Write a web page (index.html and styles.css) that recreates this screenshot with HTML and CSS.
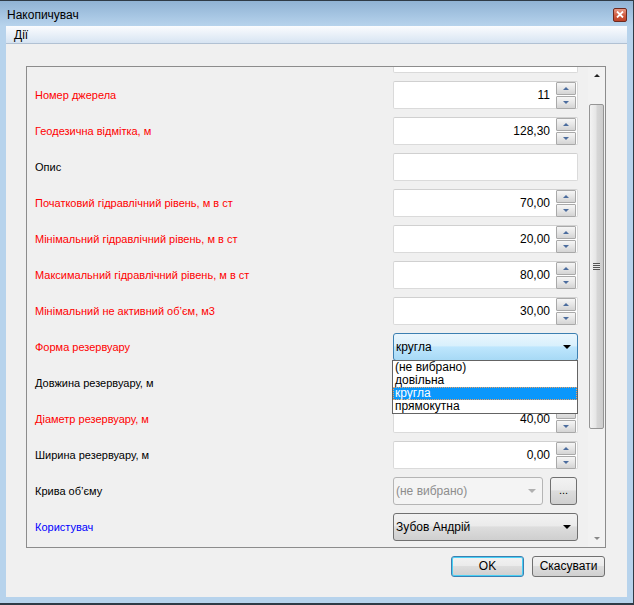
FILE: index.html
```html
<!DOCTYPE html>
<html lang="uk">
<head>
    <meta charset="UTF-8">
    <title>Накопичувач</title>
    <link rel="stylesheet" href="styles.css">
</head>
<body>
<div class="window">
    <div class="titlebar">
        <span class="title">Накопичувач</span>
        <span class="close">
            <svg width="8" height="7" viewBox="0 0 8 7"><path d="M1 0.5 L7 6.5 M7 0.5 L1 6.5" stroke="#fff" stroke-width="1.8"/></svg>
        </span>
    </div>
    <div class="menubar"><span class="menu-item">Дії</span></div>

    <div class="client">
        <div class="panel">
            <div class="scroll-area">
                <div class="rows">
                    <div class="row">
                        <span class="label"></span>
                        <div class="field"><div class="textbox"></div></div>
                    </div>
                    <div class="row">
                        <span class="label req">Номер джерела</span>
                        <div class="field">
                            <div class="textbox spin"><span class="value">11</span><span class="spin-btns"><span class="spin-up"></span><span class="spin-down"></span></span></div>
                        </div>
                    </div>
                    <div class="row">
                        <span class="label req">Геодезична відмітка, м</span>
                        <div class="field">
                            <div class="textbox spin"><span class="value">128,30</span><span class="spin-btns"><span class="spin-up"></span><span class="spin-down"></span></span></div>
                        </div>
                    </div>
                    <div class="row">
                        <span class="label">Опис</span>
                        <div class="field"><div class="textbox"></div></div>
                    </div>
                    <div class="row">
                        <span class="label req">Початковий гідравлічний рівень, м в ст</span>
                        <div class="field">
                            <div class="textbox spin"><span class="value">70,00</span><span class="spin-btns"><span class="spin-up"></span><span class="spin-down"></span></span></div>
                        </div>
                    </div>
                    <div class="row">
                        <span class="label req">Мінімальний гідравлічний рівень, м в ст</span>
                        <div class="field">
                            <div class="textbox spin"><span class="value">20,00</span><span class="spin-btns"><span class="spin-up"></span><span class="spin-down"></span></span></div>
                        </div>
                    </div>
                    <div class="row">
                        <span class="label req">Максимальний гідравлічний рівень, м в ст</span>
                        <div class="field">
                            <div class="textbox spin"><span class="value">80,00</span><span class="spin-btns"><span class="spin-up"></span><span class="spin-down"></span></span></div>
                        </div>
                    </div>
                    <div class="row">
                        <span class="label req">Мінімальний не активний об’єм, м3</span>
                        <div class="field">
                            <div class="textbox spin"><span class="value">30,00</span><span class="spin-btns"><span class="spin-up"></span><span class="spin-down"></span></span></div>
                        </div>
                    </div>
                    <div class="row">
                        <span class="label req">Форма резервуару</span>
                        <div class="field">
                            <div class="combo focused"><span class="combo-text">кругла</span><span class="arrow"></span></div>
                            <ul class="dropdown">
                                <li>(не вибрано)</li>
                                <li>довільна</li>
                                <li class="selected">кругла</li>
                                <li>прямокутна</li>
                            </ul>
                        </div>
                    </div>
                    <div class="row">
                        <span class="label">Довжина резервуару, м</span>
                        <div class="field">
                            <div class="textbox spin"><span class="value"></span><span class="spin-btns"><span class="spin-up"></span><span class="spin-down"></span></span></div>
                        </div>
                    </div>
                    <div class="row">
                        <span class="label req">Діаметр резервуару, м</span>
                        <div class="field">
                            <div class="textbox spin"><span class="value">40,00</span><span class="spin-btns"><span class="spin-up"></span><span class="spin-down"></span></span></div>
                        </div>
                    </div>
                    <div class="row">
                        <span class="label">Ширина резервуару, м</span>
                        <div class="field">
                            <div class="textbox spin"><span class="value">0,00</span><span class="spin-btns"><span class="spin-up"></span><span class="spin-down"></span></span></div>
                        </div>
                    </div>
                    <div class="row">
                        <span class="label">Крива об’єму</span>
                        <div class="field split">
                            <div class="combo disabled"><span class="combo-text">(не вибрано)</span><span class="arrow"></span></div>
                            <span class="dots-btn">...</span>
                        </div>
                    </div>
                    <div class="row">
                        <span class="label user">Користувач</span>
                        <div class="field">
                            <div class="combo"><span class="combo-text">Зубов Андрій</span><span class="arrow"></span></div>
                        </div>
                    </div>
                </div>
            </div>
            <div class="scrollbar">
                <span class="sb-btn"><span class="sb-up"></span></span>
                <span class="sb-gap"></span>
                <span class="sb-thumb"><span class="grip"></span></span>
                <span class="sb-rest"></span>
                <span class="sb-btn"><span class="sb-down"></span></span>
            </div>
        </div>

        <div class="buttons">
            <span class="btn default">OK</span>
            <span class="btn">Скасувати</span>
        </div>
    </div>
</div>
</body>
</html>
```

FILE: styles.css
```css
body {
    margin: 0;
    padding: 0;
    font-family: "Liberation Sans", Arial, sans-serif;
    font-size: 11px;
    color: #000;
    background: #fff;
}
.window {
    width: 634px;
    height: 605px;
    box-sizing: border-box;
    border-top: 1px solid #2f3b46;
    border-right: 1px solid #2f3b46;
    border-bottom: 2px solid #2f3b46;
    background: #b7d3ec;
    display: flex;
    flex-direction: column;
    overflow: hidden;
}
.titlebar {
    height: 25px;
    flex: none;
    display: flex;
    align-items: center;
    justify-content: space-between;
    padding: 0 6px 0 7px;
    background: linear-gradient(#90b3d4, #a7c6e3 60%, #b7d3ec);
}
.title {
    font-size: 12px;
    color: #000;
    margin-top: 2px;
}
.close {
    width: 12px;
    height: 12px;
    margin-top: 2px;
    border: 1px solid #6e2a1f;
    border-radius: 2px;
    background: linear-gradient(#e99a86, #cf5a3e 55%, #bd4328);
    display: flex;
    align-items: center;
    justify-content: center;
}
.menubar {
    height: 17px;
    flex: none;
    margin: 0 6px 0 6px;
    background: linear-gradient(#fbfcfe, #e9f0f8 50%, #d7e4f2);
    border-bottom: 1px solid #b1c1d3;
    display: flex;
    align-items: center;
}
.menu-item {
    padding-left: 8px;
    font-size: 12px;
}
.client {
    flex: 1;
    margin: 0 6px 6px 6px;
    background: #f0f0f0;
    display: flex;
    flex-direction: column;
}
.panel {
    margin: 22px 0 0 20px;
    width: 580px;
    height: 482px;
    box-sizing: border-box;
    border: 1px solid #8c8c8c;
    display: flex;
    overflow: hidden;
}
.scroll-area {
    flex: 1;
    overflow: hidden;
    position: relative;
}
.rows {
    margin-top: -26px;
    padding-left: 8px;
}
.row {
    height: 36px;
    display: grid;
    grid-template-columns: 358px 185px;
    align-items: center;
}
.label {
    line-height: 13px;
}
.req {
    color: #ff0000;
}
.user {
    color: #0000ff;
}
.field {
    position: relative;
    height: 28px;
}
.textbox {
    height: 28px;
    box-sizing: border-box;
    background: #fff;
    border: 1px solid #dadada;
    border-top-color: #d0d0d0;
    border-radius: 2px;
    display: flex;
    align-items: center;
}
.value {
    flex: 1;
    text-align: right;
    padding-right: 6px;
    font-size: 12px;
}
.spin-btns {
    width: 20px;
    display: flex;
    flex-direction: column;
    gap: 1px;
    margin-right: 1px;
}
.spin-up,
.spin-down {
    height: 11px;
    border: 1px solid #a9a9a9;
    border-radius: 1px;
    background: linear-gradient(#f6f6f6, #e6e6e6 50%, #d4d4d4);
    display: flex;
    align-items: center;
    justify-content: center;
    box-sizing: content-box;
    width: 18px;
}
.spin-up::after {
    content: "";
    border-left: 3px solid transparent;
    border-right: 3px solid transparent;
    border-bottom: 3px solid #4c6d9e;
}
.spin-down::after {
    content: "";
    border-left: 3px solid transparent;
    border-right: 3px solid transparent;
    border-top: 3px solid #4c6d9e;
}
.combo {
    height: 28px;
    box-sizing: border-box;
    border: 1px solid #707070;
    border-radius: 3px;
    background: linear-gradient(#f2f2f2, #ebebeb 45%, #dddddd 50%, #cfcfcf);
    display: flex;
    align-items: center;
    justify-content: space-between;
    padding: 0 6px 0 2px;
    font-size: 12px;
}
.combo.focused {
    border-color: #3c7fb1;
    background: linear-gradient(#eaf6fd, #d9f0fc 45%, #bee6fd 50%, #a7d9f5);
}
.combo.disabled {
    border-color: #b5b5b5;
    background: #f4f4f4;
    color: #8d8d8d;
}
.arrow {
    border-left: 4px solid transparent;
    border-right: 4px solid transparent;
    border-top: 4px solid #000;
}
.combo.disabled .arrow {
    border-top-color: #b0b0b0;
}
.split {
    display: flex;
    gap: 7px;
}
.split .combo {
    width: 150px;
}
.dots-btn {
    width: 27px;
    height: 28px;
    box-sizing: border-box;
    border: 1px solid #707070;
    border-radius: 3px;
    background: linear-gradient(#f2f2f2, #ebebeb 45%, #dddddd 50%, #cfcfcf);
    text-align: center;
    line-height: 24px;
}
.dropdown {
    position: absolute;
    top: 27px;
    left: -1px;
    width: 186px;
    margin: 0;
    padding: 0;
    list-style: none;
    background: #fff;
    border: 1px solid #646464;
    box-sizing: border-box;
    z-index: 2;
}
.dropdown li {
    height: 13px;
    line-height: 13px;
    padding-left: 2px;
    font-size: 12px;
}
.dropdown li.selected {
    background: #0a97fb;
    color: #fff;
    outline: 1px dotted #f0a060;
    outline-offset: -1px;
}
.scrollbar {
    width: 17px;
    flex: none;
    margin-left: 9px;
    background: #f2f2f2;
    display: flex;
    flex-direction: column;
}
.sb-btn {
    height: 17px;
    display: flex;
    align-items: center;
    justify-content: center;
}
.sb-up {
    border-left: 3px solid transparent;
    border-right: 3px solid transparent;
    border-bottom: 3px solid #222;
}
.sb-down {
    border-left: 3px solid transparent;
    border-right: 3px solid transparent;
    border-top: 3px solid #888;
}
.sb-gap {
    height: 20px;
}
.sb-thumb {
    height: 325px;
    margin: 0 1px;
    box-sizing: border-box;
    border: 1px solid #959595;
    border-radius: 2px;
    background: linear-gradient(90deg, #f3f3f3, #e6e6e6 45%, #d6d6d6 55%, #cdcdcd);
    display: flex;
    align-items: center;
    justify-content: center;
}
.grip {
    width: 7px;
    height: 7px;
    background: repeating-linear-gradient(#555 0, #555 1px, #e8e8e8 1px, #e8e8e8 2px);
}
.sb-rest {
    flex: 1;
}
.buttons {
    display: flex;
    justify-content: flex-end;
    gap: 8px;
    margin: 8px 22px 0 0;
}
.btn {
    width: 73px;
    height: 21px;
    box-sizing: border-box;
    border: 1px solid #707070;
    border-radius: 3px;
    background: linear-gradient(#f2f2f2, #ebebeb 45%, #dddddd 50%, #cfcfcf);
    text-align: center;
    line-height: 19px;
    font-size: 12px;
}
.btn.default {
    border-color: #3c7fb1;
    box-shadow: inset 0 0 0 1px #48d0f5;
}
```
